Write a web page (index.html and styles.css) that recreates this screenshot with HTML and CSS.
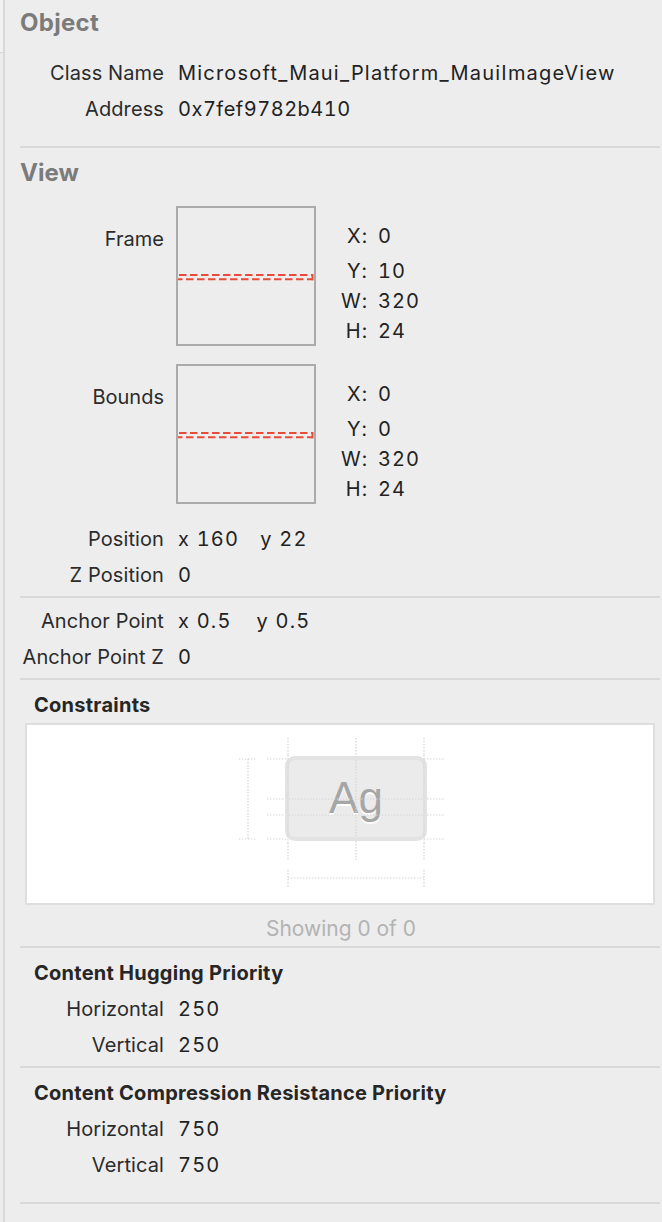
FILE: index.html
```html
<!DOCTYPE html>
<html>
<head>
<meta charset="utf-8">
<link rel="stylesheet" href="styles.css">
</head>
<body>
<div class="gutter"><div class="gutter-top"></div></div>
<main class="panel">
  <h2 class="head head-gray head-object">Object</h2>
  <div class="rows rows-first">
    <div class="row"><span class="lbl">Class Name</span><span class="val">Microsoft_Maui_Platform_MauiImageView</span></div>
    <div class="row"><span class="lbl">Address</span><span class="val val-addr">0x7fef9782b410</span></div>
  </div>
  <hr class="sep sep-object">

  <h2 class="head head-gray head-view">View</h2>
  <div class="geo geo-frame">
    <span class="geo-lbl">Frame</span>
    <div class="geo-box">
      <svg class="dash" width="136" height="136" viewBox="0 0 136 136">
        <line x1="1" y1="67" x2="135" y2="67" stroke="#e94b3a" stroke-width="2" stroke-dasharray="7.5 3.5"/>
        <line x1="0" y1="71.3" x2="135" y2="71.3" stroke="#e94b3a" stroke-width="2" stroke-dasharray="7.5 3.5" stroke-dashoffset="3"/>
        <line x1="134.5" y1="66" x2="134.5" y2="72.3" stroke="#e94b3a" stroke-width="2"/>
      </svg>
    </div>
    <div class="coords">
      <span class="c-l c-first">X:</span><span class="c-v c-first">0</span>
      <span class="c-l">Y:</span><span class="c-v">10</span>
      <span class="c-l">W:</span><span class="c-v">320</span>
      <span class="c-l">H:</span><span class="c-v">24</span>
    </div>
  </div>
  <div class="geo geo-bounds">
    <span class="geo-lbl">Bounds</span>
    <div class="geo-box">
      <svg class="dash" width="136" height="136" viewBox="0 0 136 136">
        <line x1="1" y1="67" x2="135" y2="67" stroke="#e94b3a" stroke-width="2" stroke-dasharray="7.5 3.5"/>
        <line x1="0" y1="71.3" x2="135" y2="71.3" stroke="#e94b3a" stroke-width="2" stroke-dasharray="7.5 3.5" stroke-dashoffset="3"/>
        <line x1="134.5" y1="66" x2="134.5" y2="72.3" stroke="#e94b3a" stroke-width="2"/>
      </svg>
    </div>
    <div class="coords">
      <span class="c-l c-first">X:</span><span class="c-v c-first">0</span>
      <span class="c-l">Y:</span><span class="c-v">0</span>
      <span class="c-l">W:</span><span class="c-v">320</span>
      <span class="c-l">H:</span><span class="c-v">24</span>
    </div>
  </div>

  <div class="rows rows-pos">
    <div class="row"><span class="lbl">Position</span><span class="val pair pair-pos"><span>x 160</span><span>y 22</span></span></div>
    <div class="row"><span class="lbl">Z Position</span><span class="val">0</span></div>
  </div>
  <hr class="sep sep-small">
  <div class="rows rows-anchor">
    <div class="row"><span class="lbl">Anchor Point</span><span class="val pair"><span>x 0.5</span><span>y 0.5</span></span></div>
    <div class="row"><span class="lbl">Anchor Point Z</span><span class="val">0</span></div>
  </div>
  <hr class="sep sep-small">

  <h3 class="sub sub-constraints">Constraints</h3>
  <div class="cbox">
    <svg class="diagram" width="626" height="178" viewBox="0 0 626 178">
      <g stroke="#d3d3d3" stroke-width="1.2" stroke-dasharray="1.4 1.6" fill="none">
        <line x1="212" y1="34" x2="230" y2="34"/>
        <line x1="240" y1="34" x2="260" y2="34"/>
        <line x1="397" y1="34" x2="418" y2="34"/>
        <line x1="212" y1="114" x2="230" y2="114"/>
        <line x1="240" y1="114" x2="260" y2="114"/>
        <line x1="397" y1="114" x2="418" y2="114"/>
        <line x1="221" y1="34" x2="221" y2="114"/>
        <line x1="261" y1="13" x2="261" y2="30"/>
        <line x1="397" y1="13" x2="397" y2="30"/>
        <line x1="261" y1="118" x2="261" y2="135"/>
        <line x1="397" y1="118" x2="397" y2="135"/>
        <line x1="261" y1="145" x2="261" y2="162"/>
        <line x1="397" y1="145" x2="397" y2="162"/>
        <line x1="261" y1="153" x2="397" y2="153"/>
        <line x1="240" y1="74" x2="258" y2="74"/>
        <line x1="400" y1="74" x2="418" y2="74"/>
        <line x1="240" y1="90" x2="258" y2="90"/>
        <line x1="400" y1="90" x2="418" y2="90"/>
        <line x1="329" y1="13" x2="329" y2="31"/>
        <line x1="329" y1="116" x2="329" y2="135"/>
      </g>
      <rect x="260" y="33" width="138" height="81" rx="8" fill="#ebebeb" stroke="#e3e3e3" stroke-width="4"/>
      <text x="329" y="89.5" text-anchor="middle" class="ag-shadow">Ag</text>
      <text x="329" y="88" text-anchor="middle" class="ag">Ag</text>
      <g stroke="#d6d6d6" stroke-width="1.2" stroke-dasharray="1.4 1.6" fill="none">
        <line x1="262" y1="74" x2="396" y2="74"/>
        <line x1="262" y1="90" x2="396" y2="90"/>
        <line x1="329" y1="35" x2="329" y2="112"/>
        <line x1="261" y1="30" x2="261" y2="118"/>
        <line x1="397" y1="30" x2="397" y2="118"/>
      </g>
    </svg>
  </div>
  <p class="showing">Showing 0 of 0</p>
  <hr class="sep sep-showing">

  <h3 class="sub sub-prio">Content Hugging Priority</h3>
  <div class="rows rows-prio">
    <div class="row"><span class="lbl">Horizontal</span><span class="val">250</span></div>
    <div class="row"><span class="lbl">Vertical</span><span class="val">250</span></div>
  </div>
  <hr class="sep sep-small">
  <h3 class="sub sub-prio">Content Compression Resistance Priority</h3>
  <div class="rows rows-prio">
    <div class="row"><span class="lbl">Horizontal</span><span class="val">750</span></div>
    <div class="row"><span class="lbl">Vertical</span><span class="val">750</span></div>
  </div>
  <hr class="sep sep-last">
</main>
</body>
</html>
```

FILE: styles.css
```css
html, body {
  margin: 0;
  padding: 0;
}
body {
  background: #ededed;
  font-family: "Inter", "Noto Sans", sans-serif;
  color: #252525;
  display: flex;
  min-height: 1222px;
  overflow: hidden;
}
.gutter {
  width: 3px;
  flex: none;
  background: #ececec;
}
.gutter-top {
  height: 52px;
  background: #f2f2f2;
  border-bottom: 1px solid #d6d6d6;
}
.panel {
  flex: 1;
  border-left: 2px solid #d9d9d9;
  display: flex;
  flex-direction: column;
}
.head {
  margin: 0;
  font-size: 24px;
  font-weight: 700;
  padding-left: 15px;
}
.head-gray { color: #7b7b7b; }
.head-object {
  line-height: 46px;
  height: 46px;
  letter-spacing: 0.3px;
}
.head-view {
  margin-top: 7px;
  line-height: 36px;
}
.rows {
  display: flex;
  flex-direction: column;
}
.row {
  display: grid;
  grid-template-columns: 159px 1fr;
  column-gap: 14px;
  line-height: 36px;
  height: 36px;
  font-size: 20px;
  white-space: nowrap;
}
.lbl {
  text-align: right;
  color: #2b2b2b;
  letter-spacing: 0.1px;
}
.val {
  color: #222;
  letter-spacing: 1.2px;
  font-variant-numeric: tabular-nums;
}
.val-addr {
  letter-spacing: 0.5px;
}
.pair {
  display: flex;
  gap: 25px;
}
.pair-pos { gap: 21px; }
.rows-first { margin-top: 9px; }
.rows-pos { margin-top: 17px; }
.rows-anchor { margin-top: 5px; }
.rows-prio { margin-top: 3px; }

.sep {
  border: 0;
  height: 2px;
  background: #d9d9d9;
  margin: 0 2px 0 15px;
}
.sep-object { margin-top: 19px; }
.sep-small { margin-top: 3px; }
.sep-showing { margin-top: 0; }
.sep-last { margin-top: 19px; }

.geo {
  display: grid;
  grid-template-columns: 159px 140px auto;
  column-gap: 12px;
  align-items: start;
}
.geo-frame { margin-top: 15px; }
.geo-bounds { margin-top: 18px; }
.geo-lbl {
  text-align: right;
  font-size: 20px;
  line-height: 30px;
  padding-top: 18px;
  color: #2b2b2b;
}
.geo-box {
  width: 140px;
  height: 140px;
  box-sizing: border-box;
  border: 2px solid #ababab;
  display: flex;
}
.dash { display: block; }
.coords {
  padding-top: 15px;
  display: grid;
  grid-template-columns: 40px auto;
  column-gap: 10px;
  font-size: 20px;
  line-height: 30px;
  color: #222;
  letter-spacing: 1px;
  font-variant-numeric: tabular-nums;
}
.c-l { text-align: right; }
.c-first { margin-bottom: 5px; }

.sub {
  margin: 0;
  padding-left: 29px;
  font-size: 20px;
  font-weight: 700;
  color: #262626;
  letter-spacing: 0.25px;
}
.sub-constraints {
  margin-top: 12px;
  line-height: 26px;
}
.sub-prio {
  margin-top: 10px;
  line-height: 30px;
}
.cbox {
  margin: 5px 7px 0 20px;
  height: 182px;
  box-sizing: border-box;
  border: 2px solid #dedede;
  background: #ffffff;
  display: flex;
}
.diagram { display: block; }
.ag {
  font-family: "Liberation Sans", Arial, sans-serif;
  font-size: 44px;
  fill: #a6a6a6;
}
.ag-shadow {
  font-family: "Liberation Sans", Arial, sans-serif;
  font-size: 44px;
  fill: #ffffff;
}
.showing {
  margin: 7px 0 0 0;
  line-height: 34px;
  text-align: center;
  padding-left: 15px;
  font-size: 21px;
  color: #b3b3b3;
  font-variant-numeric: tabular-nums;
}
```
